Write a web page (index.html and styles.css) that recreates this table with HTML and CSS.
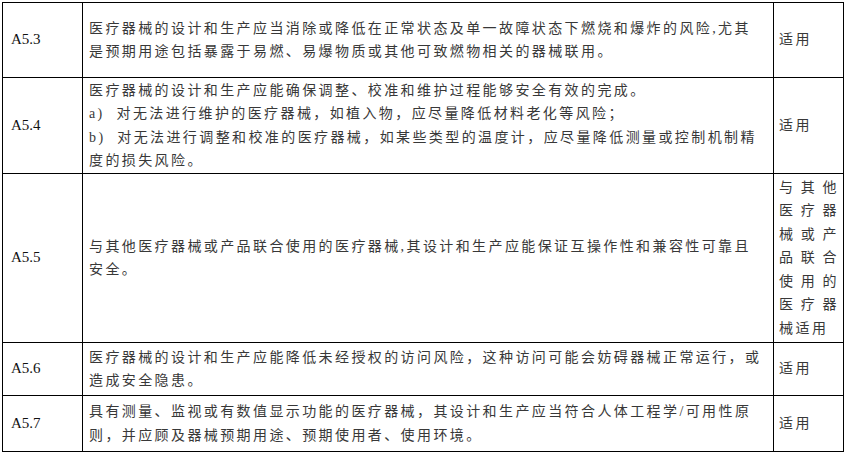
FILE: index.html
```html
<!DOCTYPE html>
<html lang="zh-CN">
<head>
<meta charset="utf-8">
<title>A5</title>
<link rel="stylesheet" href="styles.css">
</head>
<body>
<table class="spec">
  <colgroup>
    <col class="c-id">
    <col class="c-text">
    <col class="c-app">
  </colgroup>
  <tr class="r1">
    <td class="id">A5.3</td>
    <td class="text"><span class="ln">医疗器械的设计和生产应当消除或降低在正常状态及单一故障状态下燃烧和爆炸的风险,尤其</span><span class="ln">是预期用途包括暴露于易燃、易爆物质或其他可致燃物相关的器械联用。</span></td>
    <td class="app">适用</td>
  </tr>
  <tr class="r2">
    <td class="id">A5.4</td>
    <td class="text"><span class="ln">医疗器械的设计和生产应能确保调整、校准和维护过程能够安全有效的完成。</span><span class="ln">a)&nbsp; 对无法进行维护的医疗器械，如植入物，应尽量降低材料老化等风险；</span><span class="ln">b)&nbsp; 对无法进行调整和校准的医疗器械，如某些类型的温度计，应尽量降低测量或控制机制精</span><span class="ln">度的损失风险。</span></td>
    <td class="app">适用</td>
  </tr>
  <tr class="r3">
    <td class="id">A5.5</td>
    <td class="text"><span class="ln">与其他医疗器械或产品联合使用的医疗器械,其设计和生产应能保证互操作性和兼容性可靠且</span><span class="ln">安全。</span></td>
    <td class="app">与其他医疗器械或产品联合使用的医疗器械适用</td>
  </tr>
  <tr class="r4">
    <td class="id">A5.6</td>
    <td class="text"><span class="ln">医疗器械的设计和生产应能降低未经授权的访问风险，这种访问可能会妨碍器械正常运行，或</span><span class="ln">造成安全隐患。</span></td>
    <td class="app">适用</td>
  </tr>
  <tr class="r5">
    <td class="id">A5.7</td>
    <td class="text"><span class="ln">具有测量、监视或有数值显示功能的医疗器械，其设计和生产应当符合人体工程学/可用性原</span><span class="ln">则，并应顾及器械预期用途、预期使用者、使用环境。</span></td>
    <td class="app">适用</td>
  </tr>
</table>
</body>
</html>
```
FILE: styles.css
```css
html, body {
  background: #ffffff;
}
body {
  margin: 0;
  padding: 2px 0 0 2px;
}
.spec {
  border-collapse: collapse;
  width: 841px;
  table-layout: fixed;
  font-family: "Liberation Serif", "Noto Sans CJK SC", serif;
  font-size: 14px;
  color: #383838;
}
.c-id { width: 80px; }
.c-text { width: 691px; }
.c-app { width: 70px; }
.spec td {
  border: 1px solid #000;
  vertical-align: middle;
  line-height: 23.5px;
  padding: 0;
}
.id {
  font-size: 15px;
  padding-left: 8px !important;
  color: #111;
}
.text {
  padding-left: 6px !important;
  letter-spacing: 2.4px;
}
.ln {
  display: block;
  white-space: nowrap;
}
.app {
  padding: 0 4px 0 5px !important;
  letter-spacing: 2.5px;
  text-align: justify;
}
.r1 td { height: 74px; }
.r2 td { height: 95px; }
.r3 td { height: 168px; }
.r4 td { height: 52px; }
.r5 td { height: 55px; }
```
